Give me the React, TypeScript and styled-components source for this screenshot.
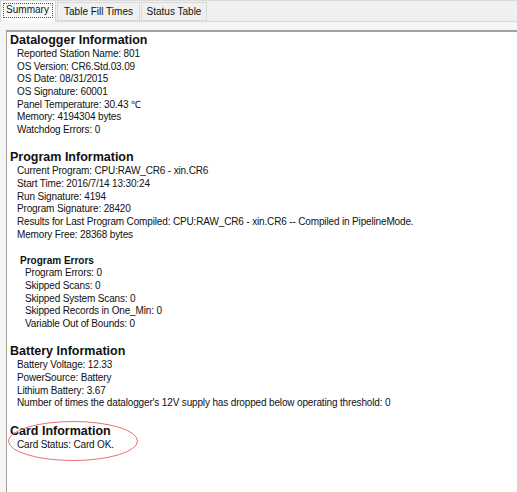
import React from "react";
import styled, { createGlobalStyle } from "styled-components";

const GlobalStyle = createGlobalStyle`
  html, body { margin: 0; padding: 0; }
  body {
    background: #f0f0f0;
    font-family: "Liberation Sans", Arial, sans-serif;
    overflow: hidden;
  }
`;

const Window = styled.div`
  width: 517px;
  height: 492px;
  display: flex;
  flex-direction: column;
  overflow: hidden;
`;

const TabStrip = styled.div`
  height: 22px;
  box-sizing: border-box;
  display: flex;
  align-items: flex-end;
  border-top: 1px solid #dadada;
  border-bottom: 1px solid #d9d9d9;
  background: #f0f0f0;
`;

const Tab = styled.div<{ $active?: boolean; $width: number }>`
  box-sizing: border-box;
  width: ${(p) => p.$width}px;
  height: ${(p) => (p.$active ? "22px" : "19px")};
  margin-bottom: ${(p) => (p.$active ? "-1px" : "0")};
  margin-left: ${(p) => (p.$active ? "0" : "1px")};
  padding-top: 3px;
  text-align: center;
  background: ${(p) => (p.$active ? "#fbfbfb" : "#f0f0f0")};
  border: 1px solid #d9d9d9;
  border-bottom: ${(p) => (p.$active ? "none" : "1px solid #d9d9d9")};
  font-size: 10px;
  line-height: 12px;
  color: #111;
  white-space: nowrap;
`;

const FocusLabel = styled.span`
  display: inline-block;
  outline: 1px dotted #555;
  padding: 0 3px 1px 2px;
`;

const PageArea = styled.div`
  flex: 1;
  display: flex;
  background: #f5f5f5;
  padding: 8px 0 0 6px;
  min-height: 0;
`;

const Panel = styled.div`
  flex: 1;
  background: #ffffff;
  border-top: 2px solid #a0a0a0;
  border-left: 1px solid #a0a0a0;
  padding: 0 0 0 3px;
  color: #111;
  overflow: hidden;
`;

const Section = styled.div`
  position: relative;
  margin-bottom: 12.67px;
`;

const Heading = styled.div`
  font-weight: bold;
  font-size: 12.5px;
  line-height: 16px;
  height: 16px;
  white-space: nowrap;
`;

const SubHeading = styled.div`
  font-weight: bold;
  font-size: 10px;
  line-height: 13.5px;
  padding-left: 10px;
  white-space: nowrap;
`;

const Line = styled.div<{ $indent?: number }>`
  font-size: 10px;
  letter-spacing: -0.15px;
  line-height: 12.67px;
  height: 12.67px;
  padding-left: ${(p) => p.$indent ?? 7}px;
  white-space: nowrap;
`;

const Ellipse = styled.svg`
  position: absolute;
  left: -3px;
  top: -3px;
  width: 132px;
  height: 42px;
  pointer-events: none;
  overflow: visible;
`;

const datalogger = [
  "Reported Station Name: 801",
  "OS Version: CR6.Std.03.09",
  "OS Date: 08/31/2015",
  "OS Signature: 60001",
  "Panel Temperature: 30.43 \u2103",
  "Memory: 4194304 bytes",
  "Watchdog Errors: 0",
];

const program = [
  "Current Program: CPU:RAW_CR6 - xin.CR6",
  "Start Time: 2016/7/14 13:30:24",
  "Run Signature: 4194",
  "Program Signature: 28420",
  "Results for Last Program Compiled: CPU:RAW_CR6 - xin.CR6 -- Compiled in PipelineMode.",
  "Memory Free: 28368 bytes",
];

const errors = [
  "Program Errors: 0",
  "Skipped Scans: 0",
  "Skipped System Scans: 0",
  "Skipped Records in One_Min: 0",
  "Variable Out of Bounds: 0",
];

const battery = [
  "Battery Voltage: 12.33",
  "PowerSource: Battery",
  "Lithium Battery: 3.67",
  "Number of times the datalogger's 12V supply has dropped below operating threshold: 0",
];

export default function App() {
  return (
    <>
      <GlobalStyle />
      <Window>
        <TabStrip>
          <Tab $active $width={56}>
            <FocusLabel>Summary</FocusLabel>
          </Tab>
          <Tab $width={83}>Table Fill Times</Tab>
          <Tab $width={66}>Status Table</Tab>
        </TabStrip>
        <PageArea>
          <Panel>
            <Section>
              <Heading>Datalogger Information</Heading>
              {datalogger.map((t) => (
                <Line key={t}>{t}</Line>
              ))}
            </Section>
            <Section>
              <Heading>Program Information</Heading>
              {program.map((t) => (
                <Line key={t}>{t}</Line>
              ))}
            </Section>
            <Section>
              <SubHeading>Program Errors</SubHeading>
              {errors.map((t) => (
                <Line key={t} $indent={15}>
                  {t}
                </Line>
              ))}
            </Section>
            <Section>
              <Heading>Battery Information</Heading>
              {battery.map((t) => (
                <Line key={t}>{t}</Line>
              ))}
            </Section>
            <Section>
              <Heading>Card Information</Heading>
              <Line>Card Status: Card OK.</Line>
              <Ellipse viewBox="0 0 132 42">
                <ellipse
                  cx="66"
                  cy="21"
                  rx="64.5"
                  ry="19.5"
                  fill="none"
                  stroke="#ec6f6f"
                  strokeWidth="1"
                />
              </Ellipse>
            </Section>
          </Panel>
        </PageArea>
      </Window>
    </>
  );
}
